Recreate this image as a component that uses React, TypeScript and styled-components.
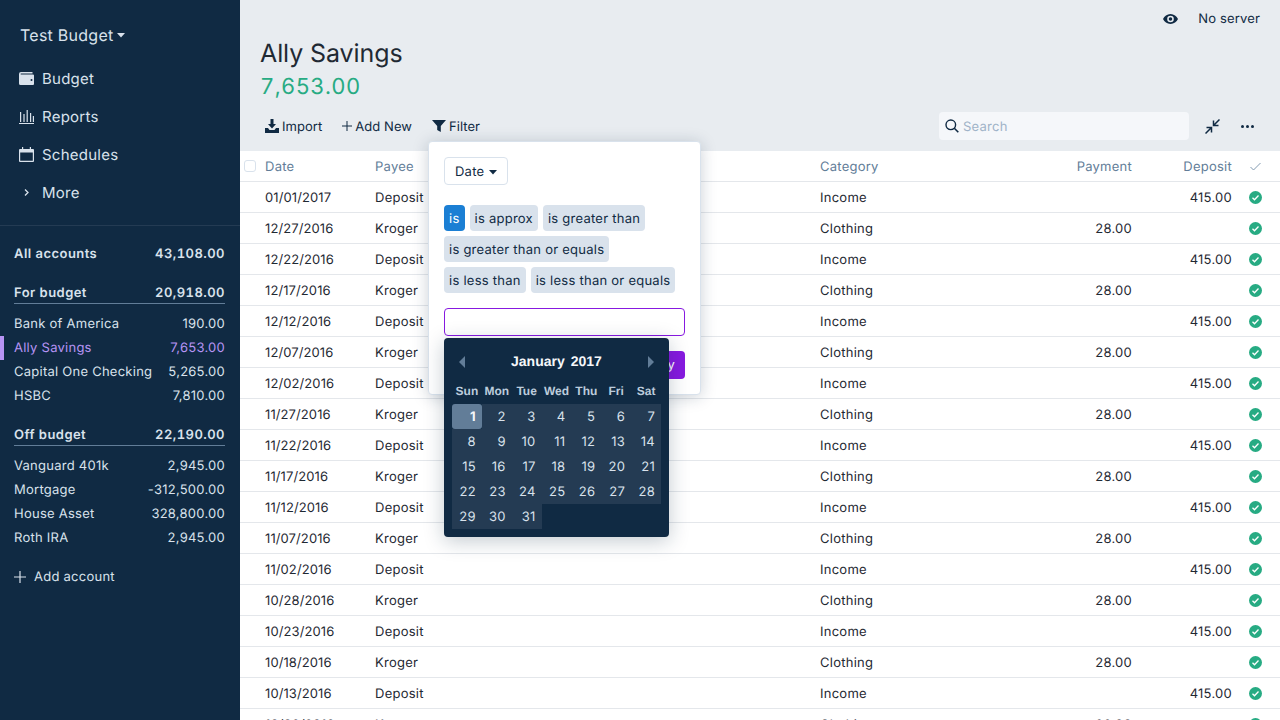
import React from 'react';
import styled, { createGlobalStyle } from 'styled-components';

const GlobalStyle = createGlobalStyle`
  html, body {
    margin: 0;
    height: 100%;
    overflow: hidden;
  }
  body {
    font-family: Inter, "Liberation Sans", sans-serif;
    font-size: 13px;
    color: #1f2933;
    letter-spacing: 0.25px;
    text-rendering: geometricPrecision;
  }
  #root {
    height: 100%;
  }
  * {
    box-sizing: border-box;
  }
`;

const Page = styled.div`
  display: flex;
  height: 720px;
  width: 1280px;
  overflow: hidden;
`;

const Sidebar = styled.aside`
  width: 240px;
  flex: none;
  background-color: #102a43;
  color: #d9e2ec;
  display: flex;
  flex-direction: column;
`;

const BudgetName = styled.div`
  display: flex;
  align-items: center;
  height: 20px;
  margin: 25px 0 14px 20px;
  font-size: 16px;
  gap: 4px;
`;

const NavItem = styled.div`
  display: flex;
  align-items: center;
  height: 38px;
  padding-left: 19px;
  font-size: 15px;
  gap: 8px;

  svg {
    flex: none;
  }
`;

const NavDivider = styled.div`
  height: 1px;
  margin-top: 14px;
  background-color: #243b53;
`;

const AccountGroup = styled.div`
  display: flex;
  flex-direction: column;
  padding: 0 15px 0 14px;
`;

const TotalRow = styled.div<{ $top: number; $underlined?: boolean }>`
  display: flex;
  justify-content: space-between;
  align-items: center;
  margin-top: ${(p) => p.$top}px;
  font-weight: 600;
  letter-spacing: 0.45px;
  font-variant-numeric: tabular-nums;
  padding-top: ${(p) => (p.$underlined ? '1px' : '0')};
  border-bottom: ${(p) => (p.$underlined ? '1px solid #627d98' : '0')};
  margin-bottom: ${(p) => (p.$underlined ? '8px' : '0')};
  height: ${(p) => (p.$underlined ? '23px' : '24px')};
`;

const AccountRow = styled.div<{ $active?: boolean }>`
  position: relative;
  display: flex;
  justify-content: space-between;
  align-items: center;
  height: 24px;
  color: ${(p) => (p.$active ? '#b794f4' : '#d9e2ec')};

  &::before {
    content: ${(p) => (p.$active ? "''" : 'none')};
    position: absolute;
    left: -14px;
    top: 0;
    bottom: 0;
    width: 4px;
    background-color: #b794f4;
  }
`;

const AddAccount = styled.div`
  display: flex;
  align-items: center;
  gap: 8px;
  margin: 15px 0 0 14px;
  height: 24px;
  color: #d9e2ec;
`;

const Main = styled.main`
  flex: 1;
  min-width: 0;
  background-color: #e8ecf0;
  display: flex;
  flex-direction: column;
`;

const TopBar = styled.div`
  display: flex;
  justify-content: flex-end;
  align-items: center;
  height: 36px;
  padding: 2px 20px 0 0;
  gap: 20px;
  color: #102a43;
  letter-spacing: 0.15px;
`;

const AccountHeader = styled.div`
  padding: 1px 0 0 20px;
  display: flex;
  flex-direction: column;
`;

const Title = styled.div`
  font-size: 25px;
  line-height: 34px;
  letter-spacing: -0.1px;
  color: #1f2933;
`;

const Balance = styled.div`
  font-size: 22px;
  line-height: 32px;
  color: #27ab83;
  letter-spacing: 0.4px;
  font-variant-numeric: tabular-nums;
`;

const Toolbar = styled.div`
  display: flex;
  align-items: center;
  height: 28px;
  margin-top: 9px;
  padding: 0 26px 0 25px;
  color: #102a43;
`;

const ToolButton = styled.div`
  position: relative;
  display: flex;
  align-items: center;
  gap: 3px;
  margin-right: 20px;
  letter-spacing: 0.05px;
`;

const ToolLabel = styled.span`
  padding-top: 2px;
`;

const SearchBox = styled.div`
  display: flex;
  align-items: center;
  gap: 4px;
  width: 250px;
  height: 28px;
  margin-left: auto;
  padding-left: 6px;
  border-radius: 4px;
  background-color: #f5f7fa;
  color: #9fb3c8;
`;

const IconButton = styled.div<{ $gap: number }>`
  display: flex;
  align-items: center;
  justify-content: center;
  margin-left: ${(p) => p.$gap}px;
  color: #102a43;
`;

const Table = styled.div`
  flex: 1;
  min-height: 0;
  margin-top: 11px;
  background-color: #fff;
  overflow: hidden;
`;

const HeaderRow = styled.div`
  display: grid;
  grid-template-columns: 25px 110px 445px 1fr 112px 100px 48px;
  align-items: center;
  height: 31px;
  padding-top: 2px;
  border-bottom: 1px solid #e4e7eb;
  color: #627d98;
`;

const Row = styled(HeaderRow)`
  color: #1f2933;
`;

const DateCell = styled.div`
  letter-spacing: 0.1px;
`;

const Numeric = styled.div`
  text-align: right;
`;

const Centered = styled.div`
  display: flex;
  justify-content: center;
  margin-top: -2px;
  padding-right: 2px;
`;

const CheckBox = styled.div`
  width: 12px;
  height: 12px;
  margin: -2px 0 0 4px;
  border: 1px solid #d9e2ec;
  border-radius: 3px;
  background-color: #fff;
`;

const Popover = styled.div`
  position: absolute;
  top: 24px;
  left: -4px;
  width: 273px;
  height: 254px;
  padding: 15px;
  background-color: #fff;
  border: 1px solid #d9e2ec;
  border-radius: 4px;
  box-shadow: 0 2px 16px rgba(16, 42, 67, 0.22);
  color: #102a43;
  letter-spacing: 0.25px;
  z-index: 5;
`;

const FieldButton = styled.div`
  display: inline-flex;
  align-items: center;
  gap: 5px;
  height: 28px;
  padding: 2px 10px 0;
  border: 1px solid #d9e2ec;
  border-radius: 4px;
`;

const OpList = styled.div`
  display: flex;
  flex-wrap: wrap;
  gap: 5px;
  margin-top: 20px;
`;

const OpChip = styled.div<{ $selected?: boolean }>`
  display: flex;
  align-items: center;
  height: 26px;
  padding: 2px 5px 0;
  border-radius: 4px;
  background-color: ${(p) => (p.$selected ? '#1b7fd4' : '#d9e2ec')};
  color: ${(p) => (p.$selected ? '#fff' : '#102a43')};
`;

const InputWrap = styled.div`
  position: relative;
  margin-top: 15px;
`;

const DateInput = styled.div`
  height: 28px;
  border: 1px solid #8719e0;
  border-radius: 4px;
  background-color: #fff;
`;

const ApplyButton = styled.div`
  display: flex;
  justify-content: flex-end;
  margin-top: 15px;
`;

const ApplyLabel = styled.div`
  display: flex;
  align-items: center;
  height: 28px;
  padding: 0 10px;
  border-radius: 4px;
  background-color: #8719e0;
  color: #fff;
`;

const Calendar = styled.div`
  position: absolute;
  top: 30px;
  left: 0;
  width: 225px;
  height: 199px;
  padding: 0 8px;
  border-radius: 4px;
  background-color: #102a43;
  box-shadow: 0 4px 20px rgba(16, 42, 67, 0.25);
  color: #d9e2ec;
  z-index: 6;
  font-family: "Liberation Sans", Arial, sans-serif;
  letter-spacing: 0;
`;

const CalendarHeader = styled.div`
  position: relative;
  display: flex;
  justify-content: center;
  align-items: center;
  gap: 6px;
  height: 46px;
  font-size: 14px;
  font-weight: 700;
  color: #f5f7fa;
`;

const MonthArrow = styled.div<{ $side: 'left' | 'right' }>`
  position: absolute;
  top: 18px;
  ${(p) => p.$side}: 7px;
  width: 0;
  height: 0;
  border-top: 6px solid transparent;
  border-bottom: 6px solid transparent;
  ${(p) => (p.$side === 'left' ? 'border-right' : 'border-left')}: 6px solid #627d98;
`;

const WeekHead = styled.div`
  display: grid;
  grid-template-columns: repeat(7, 1fr);
  align-items: center;
  height: 20px;
  padding-bottom: 9px;
  font-size: 12px;
  font-weight: 700;
  color: #bcccdc;
  text-align: center;
`;

const DayGrid = styled.div`
  display: grid;
  grid-template-columns: repeat(7, 1fr);
  grid-auto-rows: 25px;
`;

const Day = styled.div<{ $selected?: boolean }>`
  display: flex;
  align-items: center;
  justify-content: flex-end;
  padding-right: 6px;
  font-family: Inter, sans-serif;
  font-size: 13px;
  letter-spacing: 0.25px;
  background-color: ${(p) => (p.$selected ? '#627d98' : '#243b53')};
  border-radius: ${(p) => (p.$selected ? '3px' : '0')};
  font-weight: ${(p) => (p.$selected ? 700 : 400)};
  color: ${(p) => (p.$selected ? '#f5f7fa' : '#d9e2ec')};
`;

const Caret = () => (
  <svg width="8" height="5" viewBox="0 0 8 5">
    <path d="M0 0h8L4 4.600z" fill="currentColor" />
  </svg>
);

const WalletIcon = () => (
  <svg width="15" height="15" viewBox="0 0 15 15" fill="currentColor">
    <path d="M2 1h11.500v1.600H2C1.400 2.600 1.400 3.400 2 3.400h12a1 1 0 0 1 1 1V13a1 1 0 0 1-1 1H1.500A1.500 1.500 0 0 1 0 12.500V3a2 2 0 0 1 2-2zm10.500 7a1 1 0 1 0 0 2 1 1 0 0 0 0-2z" fillRule="evenodd" />
  </svg>
);

const ReportsIcon = () => (
  <svg width="15" height="15" viewBox="0 0 15 15" fill="currentColor">
    <path d="M0 14h15v1H0zM1 3h1.200v10H1zM4.400 5h1.200v8H4.400zM7.600 1h1.200v12H7.600zM11 4h1.200v9H11zM13.800 7H15v6h-1.200z" />
  </svg>
);

const CalendarIcon = () => (
  <svg width="15" height="15" viewBox="0 0 15 15" fill="currentColor">
    <path fillRule="evenodd" d="M3 0h1.200v2h6.600V0H12v2h2a1 1 0 0 1 1 1v11a1 1 0 0 1-1 1H1a1 1 0 0 1-1-1V3a1 1 0 0 1 1-1h2zM1.200 5.500v8.300h12.600V5.500z" />
  </svg>
);

const ChevronIcon = () => (
  <svg width="15" height="15" viewBox="0 0 15 15" fill="none" stroke="currentColor" strokeWidth="1.300">
    <path d="M6 4.500l3 3-3 3" />
  </svg>
);

const PlusIcon = ({ size }: { size: number }) => (
  <svg width={size} height={size} viewBox="0 0 12 12" stroke="currentColor" strokeWidth="1.200">
    <path d="M6 0v12M0 6h12" />
  </svg>
);

const EyeIcon = () => (
  <svg width="15" height="10" viewBox="0 0 15 10" fill="currentColor">
    <path fillRule="evenodd" d="M7.500 0C4 0 1.400 2.200 0 5c1.400 2.800 4 5 7.500 5S13.600 7.800 15 5C13.600 2.200 11 0 7.500 0zm0 8.300a3.300 3.300 0 1 1 0-6.600 3.300 3.300 0 0 1 0 6.600zm0-1.500a1.800 1.800 0 1 0 0-3.600 1.800 1.800 0 0 0 0 3.600z" />
  </svg>
);

const ImportIcon = () => (
  <svg width="14" height="14" viewBox="0 0 14 14" fill="currentColor">
    <path d="M5.500 0h3v5H11L7 9.500 3 5h2.500zM0 9h3l1.500 2h5L11 9h3v5H0z" />
  </svg>
);

const FilterIcon = () => (
  <svg width="14" height="12" viewBox="0 0 14 12" fill="currentColor">
    <path d="M0 0h14L8.800 6v6L5.200 10V6z" />
  </svg>
);

const SearchIcon = () => (
  <svg width="14" height="14" viewBox="0 0 14 14" fill="none" stroke="#102a43" strokeWidth="1.400">
    <circle cx="5.800" cy="5.800" r="4.800" />
    <path d="M9.300 9.300L13.300 13.300" strokeWidth="1.600" />
  </svg>
);

const CollapseIcon = () => (
  <svg width="15" height="15" viewBox="0 0 15 15" fill="none" stroke="currentColor" strokeWidth="1.500">
    <path d="M14.500 0.500L9 6M8.500 1.500v5h5" />
    <path d="M0.500 14.500L6 9M1.500 8.500h5v5" />
  </svg>
);

const DotsIcon = () => (
  <svg width="13" height="3" viewBox="0 0 13 3" fill="currentColor">
    <circle cx="1.500" cy="1.500" r="1.500" />
    <circle cx="6.500" cy="1.500" r="1.500" />
    <circle cx="11.500" cy="1.500" r="1.500" />
  </svg>
);

const TickIcon = () => (
  <svg width="11" height="9" viewBox="0 0 11 9" fill="none" stroke="#829ab1" strokeWidth="1">
    <path d="M0.500 5l3 3 7-7" />
  </svg>
);

const ClearedIcon = () => (
  <svg width="13" height="13" viewBox="0 0 13 13">
    <circle cx="6.500" cy="6.500" r="6.500" fill="#27ab83" />
    <path d="M3.500 6.800l2 2 4-4.300" fill="none" stroke="#fff" strokeWidth="1.300" />
  </svg>
);

const forBudget = [
  ['Bank of America', '190.00'],
  ['Ally Savings', '7,653.00'],
  ['Capital One Checking', '5,265.00'],
  ['HSBC', '7,810.00'],
];

const offBudget = [
  ['Vanguard 401k', '2,945.00'],
  ['Mortgage', '-312,500.00'],
  ['House Asset', '328,800.00'],
  ['Roth IRA', '2,945.00'],
];

const dates = [
  '01/01/2017', '12/27/2016', '12/22/2016', '12/17/2016', '12/12/2016', '12/07/2016',
  '12/02/2016', '11/27/2016', '11/22/2016', '11/17/2016', '11/12/2016', '11/07/2016',
  '11/02/2016', '10/28/2016', '10/23/2016', '10/18/2016', '10/13/2016', '10/08/2016',
];

const weekDays = ['Sun', 'Mon', 'Tue', 'Wed', 'Thu', 'Fri', 'Sat'];
const monthDays = Array.from({ length: 31 }, (_, i) => i + 1);
const operators = ['is', 'is approx', 'is greater than', 'is greater than or equals', 'is less than', 'is less than or equals'];

const App: React.FC = () => (
  <Page>
    <GlobalStyle />
    <Sidebar>
      <BudgetName>
        Test Budget <Caret />
      </BudgetName>
      <NavItem><WalletIcon />Budget</NavItem>
      <NavItem><ReportsIcon />Reports</NavItem>
      <NavItem><CalendarIcon />Schedules</NavItem>
      <NavItem><ChevronIcon />More</NavItem>
      <NavDivider />
      <AccountGroup>
        <TotalRow $top={16}><span>All accounts</span><span>43,108.00</span></TotalRow>
        <TotalRow $top={15} $underlined><span>For budget</span><span>20,918.00</span></TotalRow>
        {forBudget.map(([name, amount]) => (
          <AccountRow key={name} $active={name === 'Ally Savings'}>
            <span>{name}</span>
            <span>{amount}</span>
          </AccountRow>
        ))}
        <TotalRow $top={15} $underlined><span>Off budget</span><span>22,190.00</span></TotalRow>
        {offBudget.map(([name, amount]) => (
          <AccountRow key={name}>
            <span>{name}</span>
            <span>{amount}</span>
          </AccountRow>
        ))}
      </AccountGroup>
      <AddAccount><PlusIcon size={12} />Add account</AddAccount>
    </Sidebar>
    <Main>
      <TopBar>
        <EyeIcon />
        <span>No server</span>
      </TopBar>
      <AccountHeader>
        <Title>Ally Savings</Title>
        <Balance>7,653.00</Balance>
      </AccountHeader>
      <Toolbar>
        <ToolButton><ImportIcon /><ToolLabel>Import</ToolLabel></ToolButton>
        <ToolButton><PlusIcon size={10} /><ToolLabel>Add New</ToolLabel></ToolButton>
        <ToolButton>
          <FilterIcon /><ToolLabel>Filter</ToolLabel>
          <Popover>
            <FieldButton>Date <Caret /></FieldButton>
            <OpList>
              {operators.map((op) => (
                <OpChip key={op} $selected={op === 'is'}>{op}</OpChip>
              ))}
            </OpList>
            <InputWrap>
              <DateInput />
              <Calendar>
                <CalendarHeader>
                  <MonthArrow $side="left" />
                  <span>January</span>
                  <span>2017</span>
                  <MonthArrow $side="right" />
                </CalendarHeader>
                <WeekHead>
                  {weekDays.map((d) => <div key={d}>{d}</div>)}
                </WeekHead>
                <DayGrid>
                  {monthDays.map((d) => <Day key={d} $selected={d === 1}>{d}</Day>)}
                </DayGrid>
              </Calendar>
            </InputWrap>
            <ApplyButton><ApplyLabel>Apply</ApplyLabel></ApplyButton>
          </Popover>
        </ToolButton>
        <SearchBox><SearchIcon /><ToolLabel>Search</ToolLabel></SearchBox>
        <IconButton $gap={16}><CollapseIcon /></IconButton>
        <IconButton $gap={21}><DotsIcon /></IconButton>
      </Toolbar>
      <Table>
        <HeaderRow>
          <CheckBox />
          <div>Date</div>
          <div>Payee</div>
          <div>Category</div>
          <Numeric>Payment</Numeric>
          <Numeric>Deposit</Numeric>
          <Centered><TickIcon /></Centered>
        </HeaderRow>
        {dates.map((date, i) => {
          const isDeposit = i % 2 === 0;
          return (
            <Row key={date}>
              <div />
              <DateCell>{date}</DateCell>
              <div>{isDeposit ? 'Deposit' : 'Kroger'}</div>
              <div>{isDeposit ? 'Income' : 'Clothing'}</div>
              <Numeric>{isDeposit ? '' : '28.00'}</Numeric>
              <Numeric>{isDeposit ? '415.00' : ''}</Numeric>
              <Centered><ClearedIcon /></Centered>
            </Row>
          );
        })}
      </Table>
    </Main>
  </Page>
);

export default App;
